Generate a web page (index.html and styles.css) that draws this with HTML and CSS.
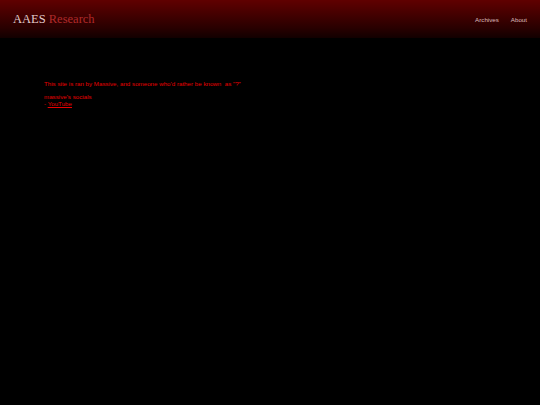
FILE: index.html
```html
<!DOCTYPE html>
<html lang="en">
<head>
    <meta charset="UTF-8">
    <meta name="viewport" content="width=device-width, initial-scale=1.0">
    <title>About - AAES Research</title>
    <link rel="stylesheet" href="styles.css">
</head>
<body>
    <header class="site-header">
        <a class="logo" href="#"><span class="logo-main">AAES</span> <span class="logo-sub">Research</span></a>
        <nav class="nav">
            <a href="#">Archives</a>
            <a href="#">About</a>
        </nav>
    </header>

    <main class="content">
        <p>This site is ran by Massive, and someone who'd rather be known &nbsp;as "?"</p>
        <p>massive's socials<br>- <a href="#">YouTube</a></p>
    </main>
</body>
</html>
```

FILE: styles.css
```css
body {
    margin: 0;
    background-color: #000000;
    font-family: "Liberation Sans", Arial, sans-serif;
    min-height: 100vh;
}
.site-header {
    height: 38px;
    display: flex;
    align-items: center;
    justify-content: space-between;
    padding: 0 13px 0 13px;
    background: linear-gradient(to bottom, #600000 0%, #2a0000 72%, #120000 100%);
}
.logo {
    font-family: "Liberation Serif", "Times New Roman", serif;
    font-size: 12.5px;
    text-decoration: none;
}
.logo-main {
    color: #e2cccc;
}
.logo-sub {
    color: #b02a2a;
}
.nav {
    display: flex;
    gap: 12px;
}
.nav a {
    color: #dcbcbc;
    font-size: 6.2px;
    text-decoration: none;
}
.content {
    padding: 42px 44px;
    color: #e80000;
    font-size: 6.2px;
    line-height: 7px;
}
.content p {
    margin: 0 0 6px 0;
}
.content a {
    color: #e80000;
}
```
